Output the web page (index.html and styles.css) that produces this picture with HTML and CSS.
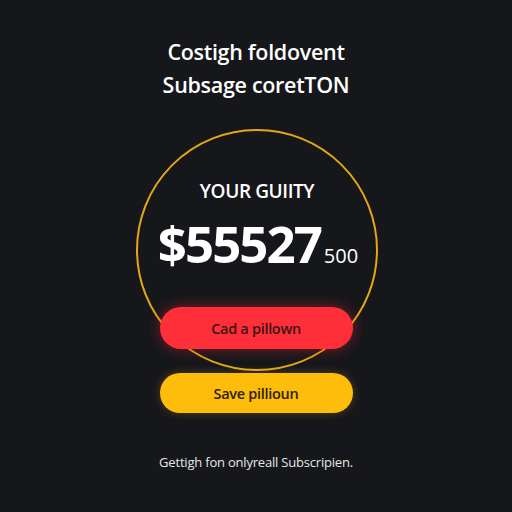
FILE: index.html
```html
<!DOCTYPE html>
<html lang="en">
<head>
<meta charset="utf-8">
<title>Subscription</title>
<link rel="stylesheet" href="styles.css">
</head>
<body>
<main class="page">
  <header class="heading">
    <h1 class="heading-line">Costigh foldovent</h1>
    <p class="heading-line">Subsage coretTON</p>
  </header>

  <section class="ring">
    <span class="ring-label">YOUR GUIITY</span>
    <div class="amount">
      <span class="amount-main">$55527</span><span class="amount-cents">500</span>
    </div>
  </section>

  <div class="actions">
    <button class="pill pill-red">Cad a pillown</button>
    <button class="pill pill-yellow">Save pillioun</button>
  </div>

  <p class="footnote">Gettigh fon onlyreall Subscripien.</p>
</main>
</body>
</html>
```

FILE: styles.css
```css
* {
  box-sizing: border-box;
}

html,
body {
  margin: 0;
  height: 100%;
}

body {
  background: #16171b;
  color: #ffffff;
  font-family: "Open Sans", "Noto Sans", sans-serif;
}

.page {
  display: flex;
  flex-direction: column;
  align-items: center;
  padding-top: 35px;
}

.heading {
  display: flex;
  flex-direction: column;
  align-items: center;
}

.heading-line {
  margin: 0;
  font-size: 21.5px;
  line-height: 33px;
  font-weight: 600;
  letter-spacing: -0.3px;
}

.ring {
  margin-top: 28px;
  margin-left: 2px;
  width: 242px;
  height: 242px;
  border: 2px solid #e3a712;
  border-radius: 50%;
  display: flex;
  flex-direction: column;
  align-items: center;
  padding-top: 48px;
}

.ring-label {
  font-size: 19px;
  line-height: 24px;
  font-weight: 600;
  letter-spacing: -0.4px;
}

.amount {
  margin-top: 10px;
  display: flex;
  align-items: baseline;
  margin-left: 2px;
}

.amount-main {
  font-size: 51px;
  line-height: 60px;
  font-weight: 700;
  letter-spacing: -2px;
}

.amount-cents {
  font-size: 20px;
  font-weight: 500;
  margin-left: 3px;
}

.actions {
  margin-top: -64px;
  display: flex;
  flex-direction: column;
  gap: 24px;
  position: relative;
}

.pill {
  width: 193px;
  border: none;
  border-radius: 999px;
  font-family: "Open Sans", "Noto Sans", sans-serif;
  font-size: 14.5px;
  font-weight: 600;
  letter-spacing: -0.3px;
  padding: 0;
}

.pill-red {
  height: 42px;
  background: #ff2f3a;
  color: #3a1416;
  box-shadow: 0 0 14px rgba(255, 40, 50, 0.45);
}

.pill-yellow {
  height: 40px;
  background: #ffbd0b;
  color: #2c2008;
  box-shadow: 0 0 10px rgba(255, 190, 20, 0.25);
}

.footnote {
  margin: 41px 0 0;
  font-size: 13px;
  line-height: 16px;
  color: #e6e6e6;
  letter-spacing: -0.2px;
}
```
